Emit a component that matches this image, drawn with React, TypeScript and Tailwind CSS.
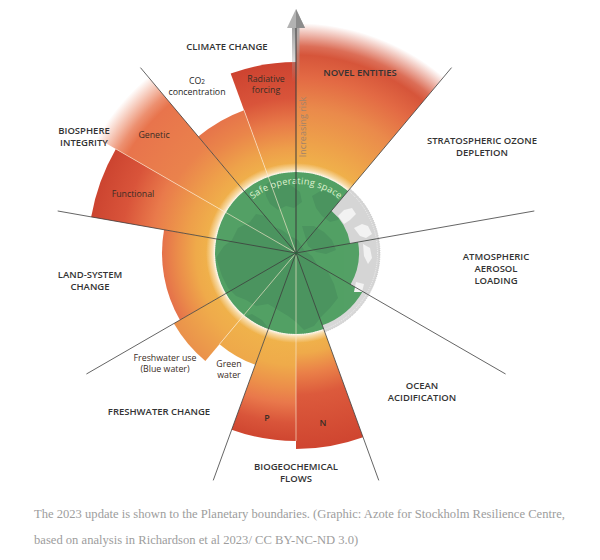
import React from "react";

const CX = 296;
const CY = 253;
const Y = "#f0b44b";

type Stop = [number, string, number?];

interface Sector {
  id: string;
  a1: number;
  a2: number;
  r: number;
  stops: Stop[];
}

// boundary wedges, angles clockwise from north
const SECTORS: Sector[] = [
  { id: "ne", a1: 0, a2: 40, r: 230, stops: [[84, Y], [110, "#eea24a"], [145, "#ea8a4b"], [175, "#e36a44"], [198, "#d6553a"], [207, "#d6553a", 0.85], [230, "#d6553a", 0]] },
  { id: "co2", a1: 320, a2: 340, r: 152, stops: [[84, Y], [105, "#eea24a"], [130, "#ea854a"], [152, "#e6744a"]] },
  { id: "rf", a1: 340, a2: 360, r: 191, stops: [[84, Y], [105, "#ee9e4a"], [130, "#e87a48"], [155, "#d9543a"], [191, "#cd4330"]] },
  { id: "gen", a1: 300, a2: 320, r: 230, stops: [[84, Y], [110, "#ee9f4a"], [140, "#ea824c"], [195, "#e8744c"], [205, "#e8744c", 0.8], [230, "#e8744c", 0]] },
  { id: "fun", a1: 280, a2: 300, r: 208, stops: [[84, Y], [110, "#ee9f4a"], [145, "#e97a4b"], [175, "#d9543a"], [208, "#cc4430"]] },
  { id: "land", a1: 240, a2: 280, r: 134, stops: [[84, Y], [100, "#efaa4a"], [118, "#eb8d4a"], [134, "#e5714a"]] },
  { id: "blue", a1: 220, a2: 240, r: 141, stops: [[84, Y], [105, "#efab4b"], [141, "#ea914b"]] },
  { id: "gw", a1: 200, a2: 220, r: 119, stops: [[84, Y], [119, "#eea84a"]] },
  { id: "p", a1: 180, a2: 200, r: 188, stops: [[84, Y], [112, "#efab4a"], [135, "#ec8e4a"], [150, "#e9784b"], [170, "#d9553a"], [188, "#cf4630"]] },
  { id: "n", a1: 160, a2: 180, r: 196, stops: [[84, Y], [100, "#efaa4a"], [120, "#ea8048"], [142, "#dc5a3c"], [196, "#cf4530"]] },
];

const pt = (a: number, r: number) => {
  const t = (a * Math.PI) / 180;
  return [CX + r * Math.sin(t), CY - r * Math.cos(t)];
};

const wedge = (a1: number, a2: number, r1: number, r0 = 0) => {
  const [x1, y1] = pt(a1, r1);
  const [x2, y2] = pt(a2, r1);
  if (r0 === 0) return `M${CX},${CY}L${x1},${y1}A${r1},${r1} 0 0 1 ${x2},${y2}Z`;
  const [x3, y3] = pt(a2, r0);
  const [x4, y4] = pt(a1, r0);
  return `M${x4},${y4}L${x1},${y1}A${r1},${r1} 0 0 1 ${x2},${y2}L${x3},${y3}A${r0},${r0} 0 0 0 ${x4},${y4}Z`;
};

const ray = (a: number, r: number, r0 = 0) => {
  const [x0, y0] = pt(a, r0);
  const [x, y] = pt(a, r);
  return { x1: x0, y1: y0, x2: x, y2: y };
};

const BIG = [
  { lines: ["CLIMATE CHANGE"], x: 227, y: 49.5 },
  { lines: ["BIOSPHERE", "INTEGRITY"], x: 84, y: 133.5 },
  { lines: ["NOVEL ENTITIES"], x: 360, y: 75.5 },
  { lines: ["STRATOSPHERIC OZONE", "DEPLETION"], x: 482, y: 143.5 },
  { lines: ["ATMOSPHERIC", "AEROSOL", "LOADING"], x: 496, y: 259.5 },
  { lines: ["LAND-SYSTEM", "CHANGE"], x: 90, y: 278 },
  { lines: ["FRESHWATER CHANGE"], x: 159, y: 414.5 },
  { lines: ["BIOGEOCHEMICAL", "FLOWS"], x: 296, y: 469.5 },
  { lines: ["OCEAN", "ACIDIFICATION"], x: 422, y: 389 },
];

const SMALL = [
  { lines: ["Radiative", "forcing"], x: 266, y: 81.5 },
  { lines: ["Genetic"], x: 154, y: 138 },
  { lines: ["Functional"], x: 133, y: 196.5 },
  { lines: ["Freshwater use", "(Blue water)"], x: 165, y: 360.5 },
  { lines: ["Green", "water"], x: 229, y: 366.5 },
];

function Diagram() {
  return (
    <svg viewBox="0 0 600 500" className="block h-[500px] w-[600px]">
      <defs>
        {SECTORS.map((s) => (
          <radialGradient key={s.id} id={`g-${s.id}`} gradientUnits="userSpaceOnUse" cx={CX} cy={CY} r={s.r}>
            {s.stops.map(([r, c, o], i) => (
              <stop key={i} offset={r / s.r} stopColor={c} stopOpacity={o ?? 1} />
            ))}
          </radialGradient>
        ))}
        <radialGradient id="glow" gradientUnits="userSpaceOnUse" cx={CX} cy={CY} r={90}>
          <stop offset={80 / 90} stopColor="#fff" stopOpacity={1} />
          <stop offset={84 / 90} stopColor="#fff" stopOpacity={0.5} />
          <stop offset={1} stopColor="#fff" stopOpacity={0} />
        </radialGradient>
        <linearGradient id="shaft" gradientUnits="userSpaceOnUse" x1={0} y1={28} x2={0} y2={82}>
          <stop offset={0} stopColor="#a3a3a3" stopOpacity={1} />
          <stop offset={1} stopColor="#a3a3a3" stopOpacity={0} />
        </linearGradient>
        <clipPath id="disk">
          <circle cx={CX} cy={CY} r={81} />
        </clipPath>
        <path id="safe-arc" d={`M${pt(-50, 69).join(",")}A69,69 0 0 1 ${pt(50, 69).join(",")}`} />
      </defs>

      {SECTORS.map((s) => (
        <path key={s.id} d={wedge(s.a1, s.a2, s.r)} fill={`url(#g-${s.id})`} />
      ))}

      {/* safe operating space */}
      <circle cx={CX} cy={CY} r={90} fill="url(#glow)" />
      <circle cx={CX} cy={CY} r={81} fill="#53a065" />
      <g clipPath="url(#disk)" fill="#44885a" opacity={0.5}>
        <path d="M216,258 L224,246 L232,240 L238,228 L250,222 L256,214 L266,216 L272,226 L282,230 L290,236 L298,240 L304,250 L312,256 L318,266 L328,272 L334,284 L338,298 L330,308 L322,316 L314,326 L304,330 L296,322 L288,316 L278,310 L268,304 L256,306 L246,300 L236,296 L228,288 L222,276Z" />
        <path d="M264,186 L272,180 L284,182 L292,186 L300,192 L302,202 L294,208 L286,206 L278,210 L270,204 L266,196Z" />
        <path d="M312,196 L322,190 L332,194 L340,202 L344,212 L338,220 L330,222 L322,216 L316,208Z" />
        <path d="M302,226 L314,226 L324,232 L332,240 L336,250 L326,254 L316,252 L308,246Z" />
        <path d="M240,318 L252,314 L262,320 L270,330 L260,334 L246,330Z" />
      </g>
      <path d={wedge(40, 80, 84, 55)} fill="#d5d5d5" />
      <path d={wedge(80, 120, 84, 63)} fill="#d5d5d5" />
      <path d={wedge(120, 160, 84, 77)} fill="#d8d8d8" />
      <g fill="#f2f2f2">
        <path d="M338,216 L344,210 L352,208 L356,214 L350,220 L344,224Z" />
        <path d="M354,228 L362,224 L368,226 L372,234 L366,238 L360,236Z" />
        <path d="M363,244 L370,248 L372,258 L368,264 L364,256Z" />
        <path d="M356,282 L364,284 L362,292 L354,292Z" />
      </g>
      <circle cx={CX} cy={CY} r={81.5} fill="none" stroke="#fff" strokeOpacity={0.85} strokeWidth={0.8} strokeDasharray="0.8 1.4" />
      <path d={`M${pt(40, 84).join(",")}A84,84 0 0 1 ${pt(160, 84).join(",")}`} fill="none" stroke="#b9b9b9" strokeWidth={0.8} strokeDasharray="0.8 1.4" />

      <text fontFamily="'Open Sans', 'Liberation Sans', sans-serif" fontSize={9.2} fill="#dff2cf" letterSpacing={0.2}>
        <textPath href="#safe-arc" startOffset="50%" textAnchor="middle">
          Safe operating space
        </textPath>
      </text>

      {/* sub-division lines */}
      <g stroke="#fbe9cf" strokeOpacity={0.8} strokeWidth={0.8}>
        <line {...ray(180, 188)} />
        <line {...ray(220, 119)} />
        <line {...ray(300, 208)} />
        <line {...ray(340, 152)} />
      </g>

      {/* boundary lines */}
      <g stroke="#3d3d3d" strokeWidth={0.8}>
        {[40, 80, 120, 160, 200, 240, 280, 320].map((a) => (
          <line key={a} {...ray(a, 242)} />
        ))}
      </g>

      {/* increasing risk arrow */}
      <rect x={292} y={28} width={4} height={54} fill="url(#shaft)" />
      <rect x={296} y={28} width={3.5} height={54} fill="url(#shaft)" opacity={0.9} />
      <polygon points="296,9 305,28 287,28" fill="#b2b2b2" />
      <polygon points="296,9 305,28 296,28" fill="#8c8c8c" />
      <line x1={296} y1={CY} x2={296} y2={28} stroke="#3a3a3a" strokeWidth={1} />
      <circle cx={CX} cy={CY} r={1.6} fill="#2f5f3d" />

      <text
        x={306}
        y={127}
        transform="rotate(-90 306 127)"
        textAnchor="middle"
        fontFamily="'Open Sans', 'Liberation Sans', sans-serif"
        fontSize={9}
        fill="#a3836a"
      >
        Increasing risk
      </text>

      <g fontFamily="'Open Sans', 'Liberation Sans', sans-serif" fontSize={9.5} fontWeight={600} fill="#333" textAnchor="middle">
        {BIG.map((l) => (
          <text key={l.lines[0]} x={l.x} y={l.y}>
            {l.lines.map((t, i) => (
              <tspan key={t} x={l.x} dy={i === 0 ? 0 : 12}>
                {t}
              </tspan>
            ))}
          </text>
        ))}
      </g>

      <g fontFamily="'Open Sans', 'Liberation Sans', sans-serif" fontSize={8.8} fontWeight={500} fill="#3a2d25" textAnchor="middle">
        {SMALL.map((l) => (
          <text key={l.lines[0]} x={l.x} y={l.y}>
            {l.lines.map((t, i) => (
              <tspan key={t} x={l.x} dy={i === 0 ? 0 : 11}>
                {t}
              </tspan>
            ))}
          </text>
        ))}
        <text x={197} y={83.5} fill="#262626">
          CO
          <tspan fontSize={6.5}>2</tspan>
        </text>
        <text x={197} y={94.5} fill="#262626">
          concentration
        </text>
        <text x={267} y={420.5} fontWeight={600}>
          P
        </text>
        <text x={323} y={425.5} fontWeight={600}>
          N
        </text>
      </g>
    </svg>
  );
}

export default function App() {
  return (
    <figure className="w-[600px] bg-white">
      <Diagram />
      <figcaption className="pl-[34px] pt-px font-['Liberation_Serif',serif] text-[12.6px] leading-[26px] text-[#9d9d9d] whitespace-nowrap">
        The 2023 update is shown to the Planetary boundaries. (Graphic: Azote for Stockholm Resilience Centre,
        <br />
        based on analysis in Richardson et al 2023/ CC BY-NC-ND 3.0)
      </figcaption>
    </figure>
  );
}
